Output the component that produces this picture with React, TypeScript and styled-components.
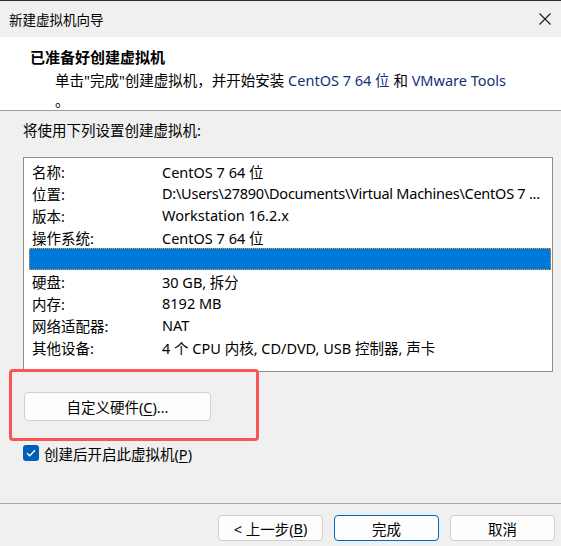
import React from "react";
import styled, { createGlobalStyle } from "styled-components";

const Global = createGlobalStyle`
  html, body { margin: 0; padding: 0; background: #f0f0f0; }
  body { font-family: "Noto Sans", "Noto Sans CJK SC", sans-serif; color: #000; }
`;

const Window = styled.div`
  width: 561px;
  height: 546px;
  display: flex;
  flex-direction: column;
  background: #f0f0f0;
  box-sizing: border-box;
  border-top: 1px solid #2b2b2b;
  font-size: 14.5px;
`;

const TitleBar = styled.div`
  height: 36px;
  flex: none;
  display: flex;
  align-items: center;
  justify-content: space-between;
  padding: 0 9px 0 9px;
  background: #f0f0f0;
  font-size: 13.5px;
`;

const CloseBtn = styled.div`
  width: 12px;
  height: 12px;
  margin-right: 1px;
  display: flex;
`;

const Header = styled.div`
  flex: none;
  height: 74px;
  box-sizing: border-box;
  background: #fff;
  border-bottom: 1px solid #a0a0a0;
  padding: 10px 0 0 30px;
`;

const Heading = styled.div`
  font-weight: 700;
  font-size: 15px;
  line-height: 20px;
`;

const SubText = styled.div`
  padding-left: 25px;
  margin-top: 3px;
  line-height: 20px;
  font-size: 14.5px;
`;

const Hl = styled.span`
  color: #12307a;
`;

const Body = styled.div`
  flex: 1;
  display: flex;
  flex-direction: column;
  padding: 0 8px 0 23px;
`;

const Label = styled.div`
  margin-top: 9px;
  line-height: 20px;
`;

const ListBox = styled.div`
  margin-top: 17px;
  height: 215px;
  box-sizing: border-box;
  border: 1px solid #8e8e8e;
  background: #fff;
  padding: 2px 1px 0 5px;
`;

const Row = styled.div<{ $selected?: boolean }>`
  display: grid;
  grid-template-columns: 130px 1fr;
  height: 22px;
  align-items: center;
  padding-left: 3px;
  box-sizing: border-box;
  white-space: nowrap;
  overflow: hidden;
  background: ${(p) => (p.$selected ? "#0078d7" : "transparent")};
  outline: ${(p) => (p.$selected ? "1px dotted #e89a3a" : "none")};
  outline-offset: -1px;
`;

const Cell = styled.span<{ $tight?: boolean }>`
  overflow: hidden;
  white-space: nowrap;
  letter-spacing: ${(p) => (p.$tight ? "-0.25px" : "normal")};
`;

const Highlight = styled.div`
  margin: -3px 0 0 -14px;
  width: 250px;
  height: 72px;
  box-sizing: border-box;
  border: 3px solid #f65656;
  border-radius: 4px;
  padding: 20px 0 0 12px;
  position: relative;
`;

const Button = styled.button<{ $primary?: boolean }>`
  font-family: inherit;
  font-size: 14.5px;
  color: #000;
  background: #fdfdfd;
  border: 1px solid ${(p) => (p.$primary ? "#0067c0" : "#d0d0d0")};
  border-radius: 4px;
  padding: 0;
  display: flex;
  align-items: center;
  justify-content: center;
  box-sizing: border-box;
`;

const WideButton = styled(Button)`
  width: 187px;
  height: 29px;
`;

const U = styled.span`
  text-decoration: underline;
  text-underline-offset: 2px;
`;

const CheckRow = styled.div`
  margin-top: 4px;
  display: flex;
  align-items: center;
  gap: 5px;
  height: 16px;
`;

const CheckBox = styled.div`
  width: 16px;
  height: 16px;
  border-radius: 3px;
  background: #005fb8;
  display: flex;
  align-items: center;
  justify-content: center;
`;

const Footer = styled.div`
  flex: none;
  height: 43px;
  box-sizing: border-box;
  border-top: 1px solid #a8a8a8;
  padding: 11px 6px 0 0;
  display: flex;
  justify-content: flex-end;
  gap: 11px;
`;

const FooterButton = styled(Button)`
  width: 105px;
  height: 26px;
`;

const rows: [string, string, boolean?, boolean?][] = [
  ["名称:", "CentOS 7 64 位"],
  ["位置:", "D:\\Users\\27890\\Documents\\Virtual Machines\\CentOS 7 ...", false, true],
  ["版本:", "Workstation 16.2.x"],
  ["操作系统:", "CentOS 7 64 位"],
  ["", "", true],
  ["硬盘:", "30 GB, 拆分"],
  ["内存:", "8192 MB"],
  ["网络适配器:", "NAT"],
  ["其他设备:", "4 个 CPU 内核, CD/DVD, USB 控制器, 声卡"],
];

export default function App() {
  return (
    <>
      <Global />
      <Window>
        <TitleBar>
          <span>新建虚拟机向导</span>
          <CloseBtn>
            <svg width="12" height="12" viewBox="0 0 12 12">
              <path d="M0.5 0.5 L11.5 11.5 M11.5 0.5 L0.5 11.5" stroke="#1a1a1a" strokeWidth="1.1" />
            </svg>
          </CloseBtn>
        </TitleBar>
        <Header>
          <Heading>已准备好创建虚拟机</Heading>
          <SubText>
            单击"完成"创建虚拟机，并开始安装 <Hl>CentOS 7 64 位</Hl> 和 <Hl>VMware Tools</Hl>
            <br />。
          </SubText>
        </Header>
        <Body>
          <Label>将使用下列设置创建虚拟机:</Label>
          <ListBox>
            {rows.map(([k, v, sel, tight], i) => (
              <Row key={i} $selected={sel}>
                <Cell>{k}</Cell>
                <Cell $tight={tight}>{v}</Cell>
              </Row>
            ))}
          </ListBox>
          <Highlight>
            <WideButton>
              自定义硬件(<U>C</U>)...
            </WideButton>
          </Highlight>
          <CheckRow>
            <CheckBox>
              <svg width="10" height="8" viewBox="0 0 10 8">
                <path d="M1 4.2 L3.7 6.8 L9 1.2" stroke="#fff" strokeWidth="1.3" fill="none" />
              </svg>
            </CheckBox>
            <span>
              创建后开启此虚拟机(<U>P</U>)
            </span>
          </CheckRow>
        </Body>
        <Footer>
          <FooterButton>
            &lt; 上一步(<U>B</U>)
          </FooterButton>
          <FooterButton $primary>完成</FooterButton>
          <FooterButton>取消</FooterButton>
        </Footer>
      </Window>
    </>
  );
}
